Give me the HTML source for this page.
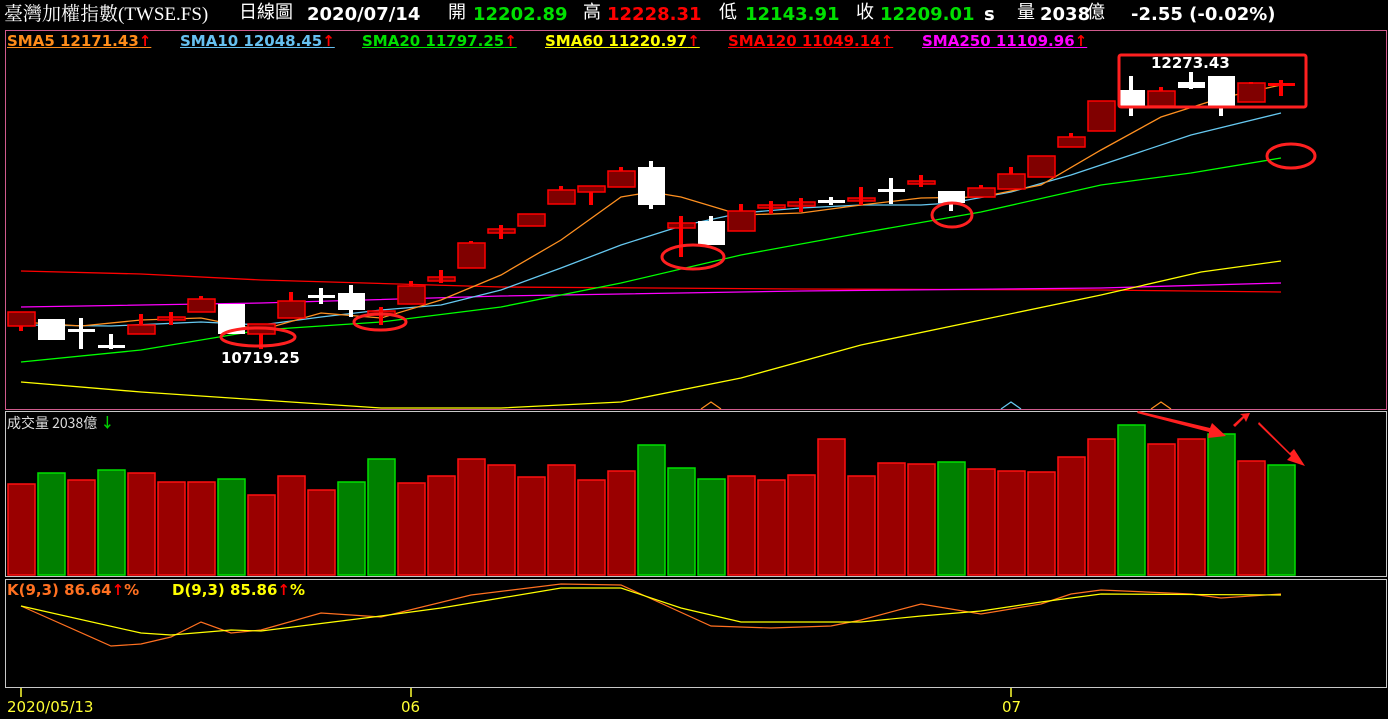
<!DOCTYPE html><html><head><meta charset="utf-8"><style>
body{margin:0;background:#000;width:1388px;height:719px;overflow:hidden;font-family:"DejaVu Sans","Noto Sans CJK TC",sans-serif}
.t{position:absolute;white-space:nowrap}
.h{position:absolute;top:4px;font-size:18px;font-weight:bold;color:#fff;white-space:nowrap;line-height:22px}
.c{font-weight:normal;font-family:"Noto Sans CJK TC",sans-serif;font-size:18px;top:0px}
.s{position:absolute;top:32px;font-size:15px;font-weight:bold;text-decoration:underline;white-space:nowrap}
.s b{color:#f00}
</style></head><body>
<div class="h" style="left:4px;top:4px;font-family:'Liberation Serif','Noto Serif CJK TC',serif;font-weight:normal;font-size:19px">臺灣加權指數(TWSE.FS)</div>
<div class="h c" style="left:239px">日線圖</div>
<div class="h" style="left:307px">2020/07/14</div>
<div class="h c" style="left:448px">開</div>
<div class="h" style="left:473px;color:#00e000">12202.89</div>
<div class="h c" style="left:583px">高</div>
<div class="h" style="left:607px;color:#f00">12228.31</div>
<div class="h c" style="left:719px">低</div>
<div class="h" style="left:745px;color:#00e000">12143.91</div>
<div class="h c" style="left:856px">收</div>
<div class="h" style="left:880px;color:#00e000">12209.01</div>
<div class="h" style="left:984px">s</div>
<div class="h c" style="left:1017px">量</div>
<div class="h" style="left:1040px">2038</div>
<div class="h c" style="left:1087px">億</div>
<div class="h" style="left:1131px">-2.55 (-0.02%)</div>
<div class="s" style="left:7px;color:#ff8c1a">SMA5 12171.43<b>↑</b></div>
<div class="s" style="left:180px;color:#66c0f0">SMA10 12048.45<b>↑</b></div>
<div class="s" style="left:362px;color:#00e000">SMA20 11797.25<b>↑</b></div>
<div class="s" style="left:545px;color:#ffff00">SMA60 11220.97<b>↑</b></div>
<div class="s" style="left:728px;color:#f00">SMA120 11049.14<b>↑</b></div>
<div class="s" style="left:922px;color:#ff00ff">SMA250 11109.96<b>↑</b></div>
<div class="t" style="left:7px;top:413px;font-size:14px;color:#ddd;font-family:'Noto Sans CJK TC',sans-serif">成交量 2038億 <span style="color:#00d000;font-weight:bold">↓</span></div>
<div class="t" style="left:7px;top:581px;font-size:15px;font-weight:bold"><span style="color:#ff7020">K(9,3) 86.64<span style="color:#f00">↑</span>%</span></div>
<div class="t" style="left:172px;top:581px;font-size:15px;font-weight:bold"><span style="color:#ffff00">D(9,3) 85.86<span style="color:#f00">↑</span>%</span></div>
<div class="t" style="left:7px;top:698px;font-size:15px;color:#ffff33">2020/05/13</div>
<div class="t" style="left:401px;top:698px;font-size:15px;color:#ffff33">06</div>
<div class="t" style="left:1002px;top:698px;font-size:15px;color:#ffff33">07</div>
<div class="t" style="left:221px;top:349px;font-size:15px;font-weight:bold;color:#fff">10719.25</div>
<div class="t" style="left:1151px;top:54px;font-size:15px;font-weight:bold;color:#fff">12273.43</div>
<svg width="1388" height="719" style="position:absolute;left:0;top:0">
<rect x="5.5" y="30.5" width="1381" height="379" fill="none" stroke="#d05a8c"/>
<rect x="5.5" y="411.5" width="1381" height="165" fill="none" stroke="#c8c8c8"/>
<rect x="5.5" y="579.5" width="1381" height="108" fill="none" stroke="#c8c8c8"/>
<g stroke="#ffff33" stroke-width="1.5"><line x1="21" y1="688" x2="21" y2="697"/><line x1="411" y1="688" x2="411" y2="697"/><line x1="1011" y1="688" x2="1011" y2="697"/></g>
<g fill="none" stroke-width="1.3">
<polyline stroke="#ff0000" points="21,271 141,274 261,280 501,287 801,289 1101,290 1281,292"/>
<polyline stroke="#ff00ff" points="21,307 261,303 501,296 801,291 1101,288 1281,283"/>
<polyline stroke="#ffff00" points="21,382 141,392 261,400 381,408 501,408 621,402 741,378 861,345 981,320 1101,295 1201,272 1281,261"/>
<polyline stroke="#00ff00" points="21,362 141,350 261,330 381,322 501,307 621,283 741,255 861,233 981,212 1101,185 1191,173 1281,158"/>
<polyline stroke="#66c8f0" points="21,325 111,326 201,322 261,325 321,317 381,310 441,305 501,290 561,268 621,245 681,226 741,213 801,208 861,205 921,205 951,203 1011,192 1071,175 1131,155 1191,135 1281,113"/>
<polyline stroke="#ff9020" points="21,322 81,326 141,320 201,318 261,330 321,313 381,318 441,300 501,275 561,240 621,197 651,192 681,197 741,215 801,213 861,205 921,198 981,197 1041,185 1101,150 1161,117 1221,98 1281,85"/>
<polyline stroke="#ff9020" points="701,409 711,402 721,409"/><polyline stroke="#66c8f0" points="1001,409 1011,402 1021,409"/><polyline stroke="#ff9020" points="1151,409 1161,402 1171,409"/>
</g>
<g fill="#800000" stroke="#ff0000" stroke-width="1.5">
<rect x="8" y="312" width="27" height="14"/><rect x="128" y="325" width="27" height="9"/><rect x="158" y="317" width="27" height="3"/><rect x="188" y="299" width="27" height="13"/><rect x="248" y="324" width="27" height="10"/><rect x="278" y="301" width="27" height="17"/><rect x="368" y="311" width="27" height="4"/><rect x="398" y="286" width="27" height="18"/><rect x="428" y="277" width="27" height="4"/><rect x="458" y="243" width="27" height="25"/><rect x="488" y="229" width="27" height="4"/><rect x="518" y="214" width="27" height="12"/><rect x="548" y="190" width="27" height="14"/><rect x="578" y="186" width="27" height="6"/><rect x="608" y="171" width="27" height="16"/><rect x="668" y="223" width="27" height="5"/><rect x="728" y="211" width="27" height="20"/><rect x="758" y="205" width="27" height="3"/><rect x="788" y="202" width="27" height="4"/><rect x="848" y="198" width="27" height="3"/><rect x="908" y="181" width="27" height="3"/><rect x="968" y="188" width="27" height="9"/><rect x="998" y="174" width="27" height="15"/><rect x="1028" y="156" width="27" height="21"/><rect x="1058" y="137" width="27" height="10"/><rect x="1088" y="101" width="27" height="30"/><rect x="1148" y="91" width="27" height="15"/><rect x="1238" y="83" width="27" height="19"/>
</g>
<g fill="#ff0000">
<rect x="19" y="326" width="4" height="5"/><rect x="139" y="314" width="4" height="11"/><rect x="169" y="312" width="4" height="13"/><rect x="199" y="296" width="4" height="3"/><rect x="259" y="334" width="4" height="15"/><rect x="289" y="292" width="4" height="9"/><rect x="379" y="307" width="4" height="18"/><rect x="409" y="281" width="4" height="5"/><rect x="439" y="270" width="4" height="13"/><rect x="469" y="241" width="4" height="2"/><rect x="499" y="225" width="4" height="14"/><rect x="559" y="186" width="4" height="4"/><rect x="589" y="192" width="4" height="13"/><rect x="619" y="167" width="4" height="4"/><rect x="679" y="216" width="4" height="41"/><rect x="739" y="204" width="4" height="7"/><rect x="769" y="201" width="4" height="13"/><rect x="799" y="198" width="4" height="14"/><rect x="859" y="187" width="4" height="18"/><rect x="919" y="175" width="4" height="12"/><rect x="979" y="185" width="4" height="3"/><rect x="1009" y="167" width="4" height="7"/><rect x="1069" y="133" width="4" height="4"/><rect x="1159" y="87" width="4" height="4"/><rect x="1249" y="82" width="4" height="2"/>
<rect x="1268" y="83" width="27" height="3"/><rect x="1279" y="80" width="4" height="16"/>
</g>
<g fill="#ffffff">
<rect x="38" y="319" width="27" height="21"/><rect x="68" y="329" width="27" height="3"/><rect x="79" y="318" width="4" height="31"/><rect x="98" y="345" width="27" height="3"/><rect x="109" y="334" width="4" height="15"/><rect x="218" y="304" width="27" height="30"/><rect x="308" y="295" width="27" height="3"/><rect x="319" y="288" width="4" height="16"/><rect x="338" y="293" width="27" height="17"/><rect x="349" y="285" width="4" height="32"/><rect x="638" y="167" width="27" height="38"/><rect x="649" y="161" width="4" height="48"/><rect x="698" y="221" width="27" height="24"/><rect x="709" y="216" width="4" height="5"/><rect x="818" y="200" width="27" height="3"/><rect x="829" y="197" width="4" height="8"/><rect x="878" y="189" width="27" height="3"/><rect x="889" y="178" width="4" height="26"/><rect x="938" y="191" width="27" height="12"/><rect x="949" y="203" width="4" height="8"/><rect x="1118" y="90" width="27" height="16"/><rect x="1129" y="76" width="4" height="40"/><rect x="1178" y="82" width="27" height="6"/><rect x="1189" y="72" width="4" height="17"/><rect x="1208" y="76" width="27" height="30"/><rect x="1219" y="76" width="4" height="40"/>
</g>
<g fill="none" stroke="#ff2020" stroke-width="3">
<ellipse cx="258" cy="337" rx="37" ry="9"/><ellipse cx="380" cy="322" rx="26" ry="8"/><ellipse cx="693" cy="257" rx="31" ry="12"/><ellipse cx="952" cy="215" rx="20" ry="12"/><ellipse cx="1291" cy="156" rx="24" ry="12"/>
<rect x="1119" y="55" width="187" height="52" rx="2"/>
</g>
<g stroke-width="1.5">
<g fill="#9a0000" stroke="#ff1010">
<rect x="8" y="484" width="27" height="91"/><rect x="68" y="480" width="27" height="95"/><rect x="128" y="473" width="27" height="102"/><rect x="158" y="482" width="27" height="93"/><rect x="188" y="482" width="27" height="93"/><rect x="248" y="495" width="27" height="80"/><rect x="278" y="476" width="27" height="99"/><rect x="308" y="490" width="27" height="85"/><rect x="398" y="483" width="27" height="92"/><rect x="428" y="476" width="27" height="99"/><rect x="458" y="459" width="27" height="116"/><rect x="488" y="465" width="27" height="110"/><rect x="518" y="477" width="27" height="98"/><rect x="548" y="465" width="27" height="110"/><rect x="578" y="480" width="27" height="95"/><rect x="608" y="471" width="27" height="104"/><rect x="728" y="476" width="27" height="99"/><rect x="758" y="480" width="27" height="95"/><rect x="788" y="475" width="27" height="100"/><rect x="818" y="439" width="27" height="136"/><rect x="848" y="476" width="27" height="99"/><rect x="878" y="463" width="27" height="112"/><rect x="908" y="464" width="27" height="111"/><rect x="968" y="469" width="27" height="106"/><rect x="998" y="471" width="27" height="104"/><rect x="1028" y="472" width="27" height="103"/><rect x="1058" y="457" width="27" height="118"/><rect x="1088" y="439" width="27" height="136"/><rect x="1148" y="444" width="27" height="131"/><rect x="1178" y="439" width="27" height="136"/><rect x="1238" y="461" width="27" height="114"/>
</g>
<g fill="#008000" stroke="#00e000">
<rect x="38" y="473" width="27" height="102"/><rect x="98" y="470" width="27" height="105"/><rect x="218" y="479" width="27" height="96"/><rect x="338" y="482" width="27" height="93"/><rect x="368" y="459" width="27" height="116"/><rect x="638" y="445" width="27" height="130"/><rect x="668" y="468" width="27" height="107"/><rect x="698" y="479" width="27" height="96"/><rect x="938" y="462" width="27" height="113"/><rect x="1118" y="425" width="27" height="150"/><rect x="1208" y="434" width="27" height="141"/><rect x="1268" y="465" width="27" height="110"/>
</g></g>
<g fill="#ff2020">
<polygon points="1138,411 1210,428 1212,423 1226,436 1208,438 1209,432 1137,413"/>
<polygon points="1233,425 1243,416 1240,414 1250,413 1246,422 1244,418 1235,427"/>
<polygon points="1259,422 1290,453 1294,449 1305,466 1287,460 1291,456 1258,424"/>
</g>
<g fill="none" stroke-width="1.2">
<polyline stroke="#ff7020" points="21,606 111,646 141,644 171,637 201,622 231,633 261,630 321,613 381,617 471,595 561,584 621,585 711,626 771,628 831,626 861,620 921,604 981,614 1041,604 1071,594 1101,590 1191,594 1221,598 1281,594"/>
<polyline stroke="#ffff00" points="21,606 141,633 171,635 231,630 261,631 381,616 441,608 501,598 561,588 621,588 681,608 741,622 801,622 861,622 921,616 981,611 1041,602 1101,594 1281,595"/>
</g>
</svg>
</body></html>
